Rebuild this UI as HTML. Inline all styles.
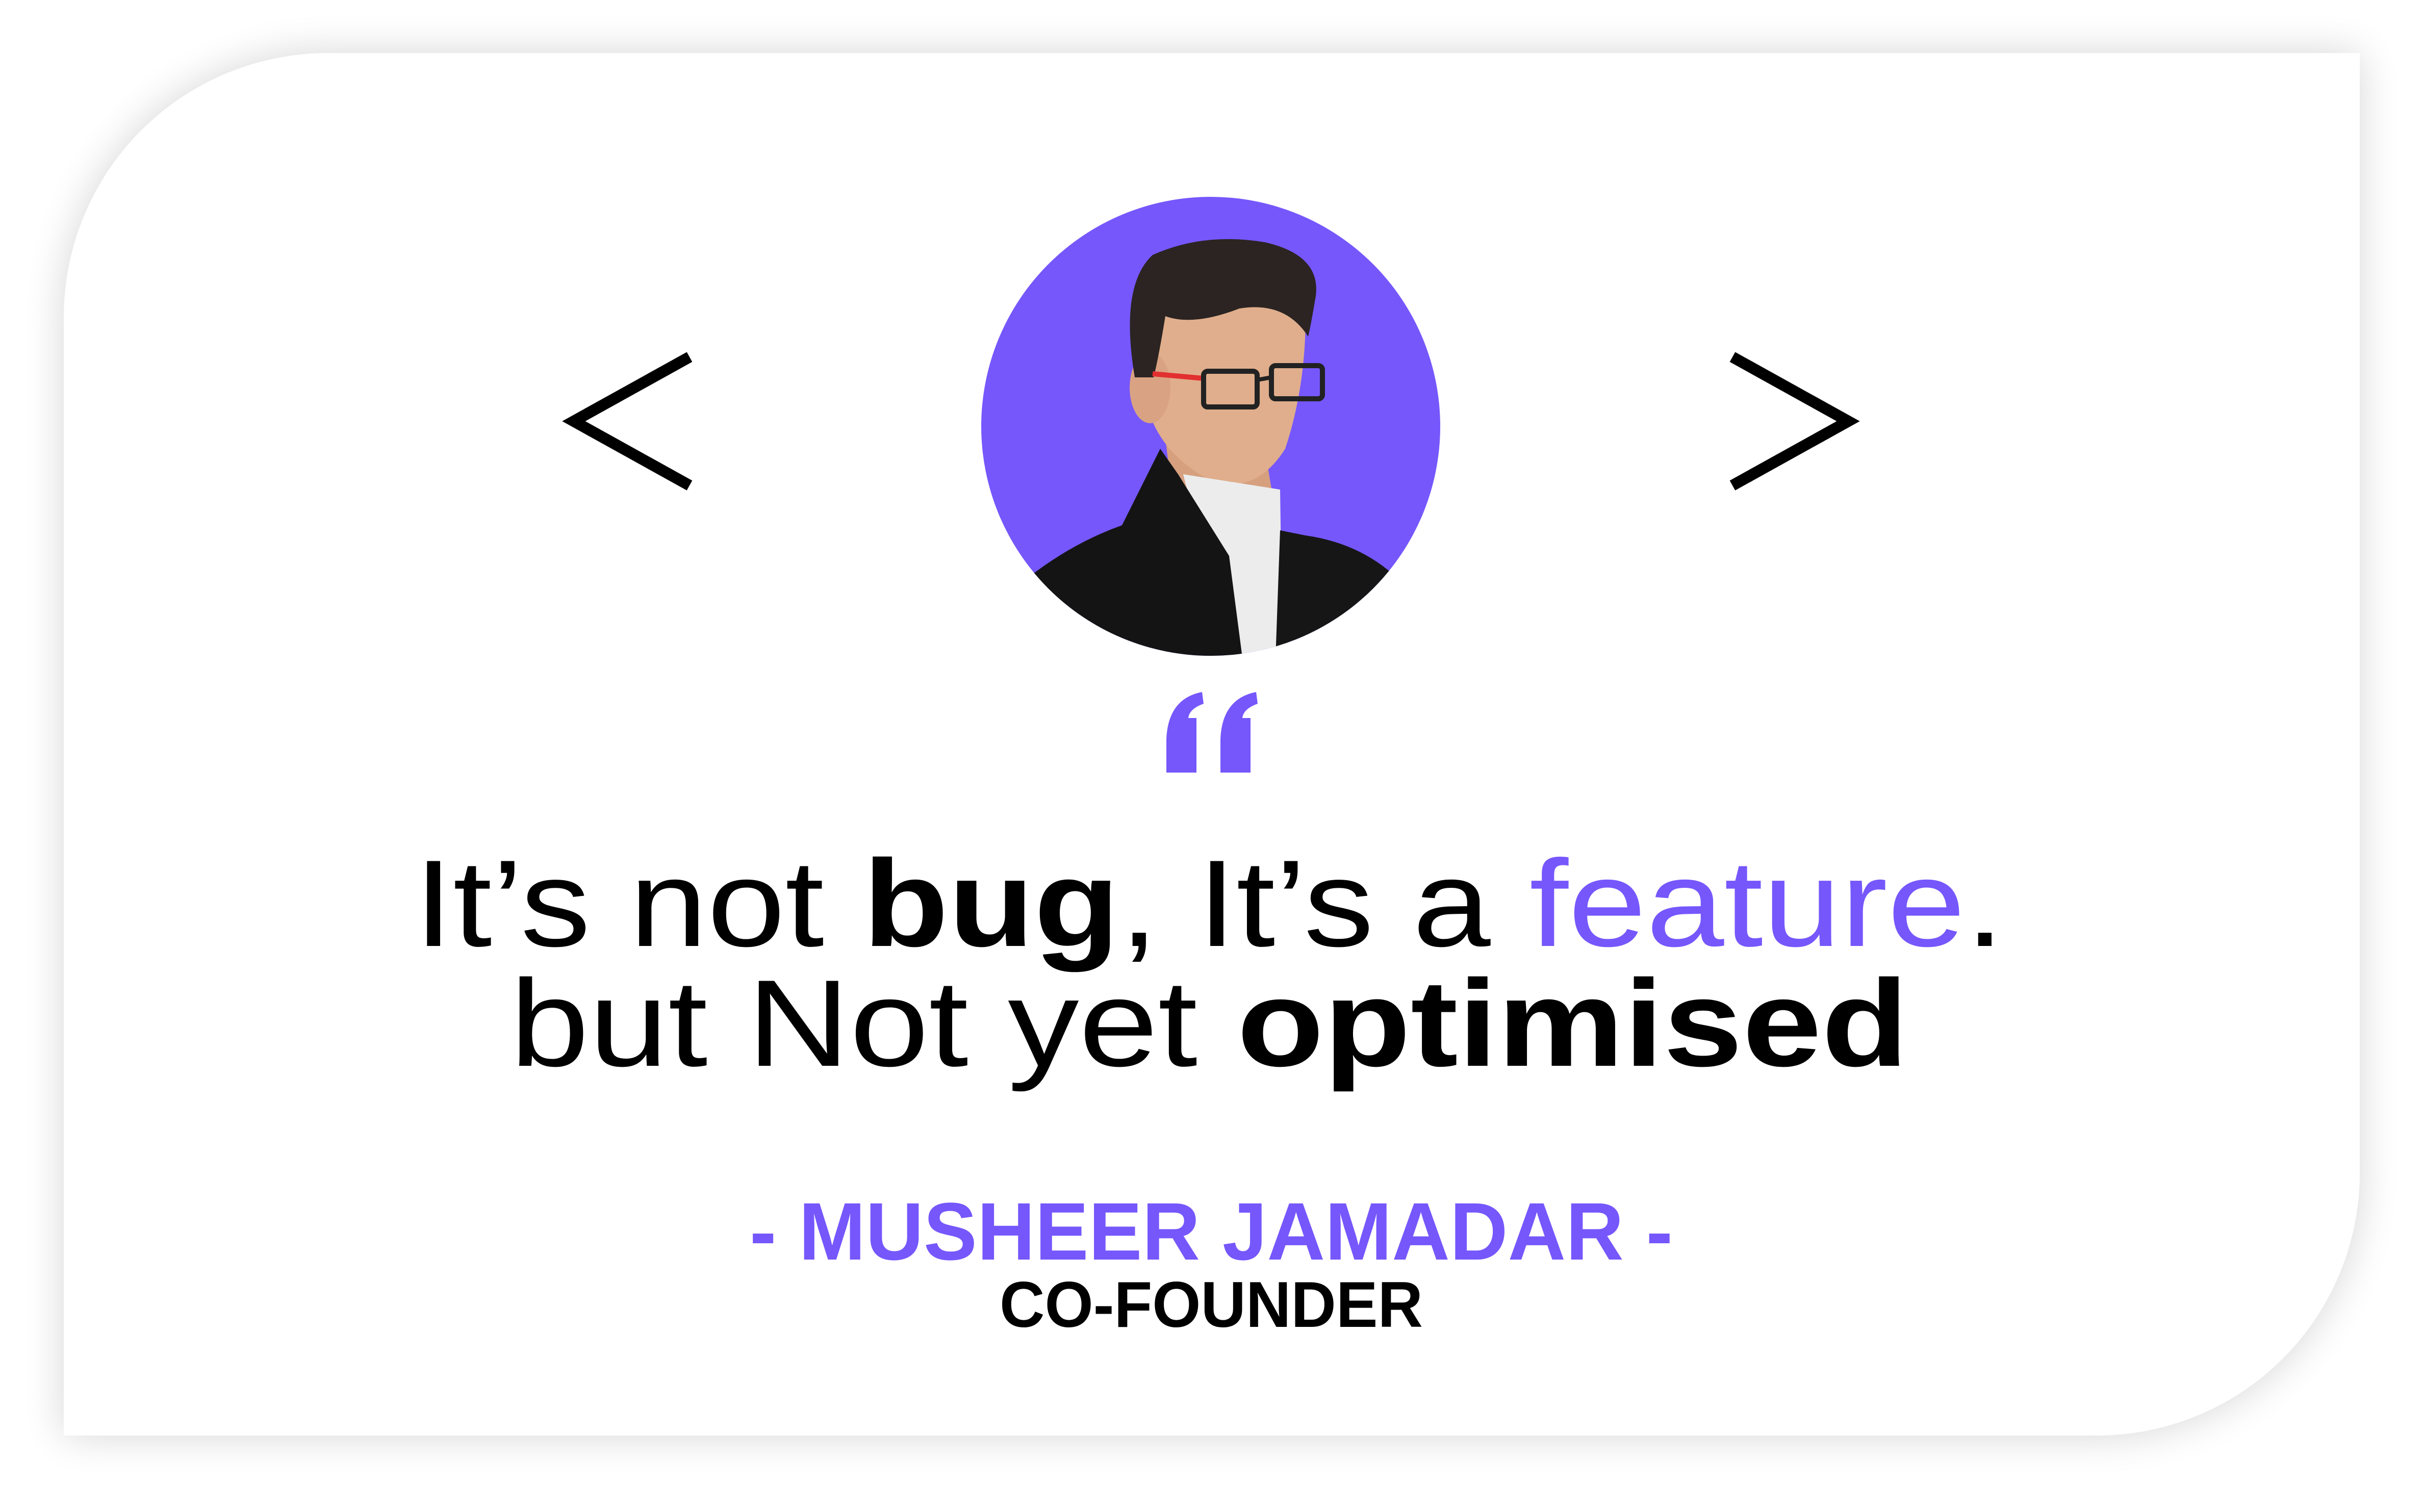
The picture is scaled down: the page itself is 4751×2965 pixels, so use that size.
<!DOCTYPE html>
<html><head><meta charset="utf-8">
<style>
html,body{margin:0;padding:0;background:#fff;}
body{width:4751px;height:2960px;overflow:hidden;position:relative;}
</style></head>
<body>
<svg width="4751" height="2960" viewBox="0 0 4751 2960" xmlns="http://www.w3.org/2000/svg">
<defs>
<filter id="sh" x="-10%" y="-10%" width="120%" height="120%">
<feGaussianBlur stdDeviation="40"/>
</filter>
<clipPath id="cc"><circle cx="2374" cy="836" r="450"/></clipPath>
</defs>
<path d="M125 622 A518 518 0 0 1 643 104 L4627 104 L4627 2300 A515 515 0 0 1 4112 2815 L125 2815 Z" fill="#000" opacity="0.16" filter="url(#sh)"/>
<path d="M125 622 A518 518 0 0 1 643 104 L4627 104 L4627 2300 A515 515 0 0 1 4112 2815 L125 2815 Z" fill="#fff"/>

<polyline points="1352,700 1125,826 1352,952" fill="none" stroke="#000" stroke-width="22"/>
<polyline points="3397,700 3624,826 3397,952" fill="none" stroke="#000" stroke-width="22"/>

<circle cx="2374" cy="836" r="450" fill="#7657fc"/>
<g clip-path="url(#cc)">
 <path d="M2280 820 L2470 820 L2500 1000 L2300 980 Z" fill="#d6a07f"/>
 <path d="M2240 560 Q2230 700 2250 800 Q2280 900 2390 950 Q2470 960 2520 880 Q2560 760 2560 620 Q2540 520 2400 520 Q2280 520 2240 560Z" fill="#e0ae8c"/>
 <ellipse cx="2255" cy="760" rx="40" ry="70" fill="#d9a283"/>
 <path d="M2225 740 Q2195 560 2260 500 Q2360 455 2480 475 Q2590 500 2580 580 Q2570 640 2565 660 Q2520 590 2430 605 Q2340 640 2285 620 Q2272 700 2262 740Z" fill="#2b2422"/>
 <path d="M2260 733 L2360 742" stroke="#e23030" stroke-width="10"/>
 <rect x="2360" y="728" width="105" height="70" rx="8" fill="none" stroke="#222" stroke-width="10"/>
 <rect x="2493" y="717" width="100" height="65" rx="8" fill="none" stroke="#222" stroke-width="10"/>
 <path d="M2465 745 L2493 740" stroke="#222" stroke-width="8"/>
 <path d="M2320 930 L2510 960 L2515 1320 L2420 1320 Z" fill="#ececec"/>
 <path d="M1940 1200 Q2060 1080 2200 1030 L2275 880 L2310 930 L2410 1090 L2440 1320 L1940 1320 Z" fill="#141414"/>
 <path d="M2500 1320 L2510 1040 L2560 1050 Q2700 1070 2780 1180 L2820 1320 Z" fill="#161616"/>
</g>

<g fill="#7657fc">
 <path d="M2287 1515 L2346 1515 L2346 1408 L2330 1408 Q2332 1390 2360 1380 L2357 1357 Q2290 1370 2287 1450 Z"/>
 <path d="M2393 1515 L2452 1515 L2452 1408 L2436 1408 Q2438 1390 2466 1380 L2463 1357 Q2396 1370 2393 1450 Z"/>
</g>

<g font-family="'Liberation Sans', sans-serif" text-anchor="start">
<text x="812" y="1855" font-size="242" textLength="3118" lengthAdjust="spacingAndGlyphs" fill="#000">It’s not <tspan font-weight="bold">bug</tspan>, It’s a <tspan fill="#7657fc">feature</tspan>.</text>
<text x="1000" y="2090" font-size="242" textLength="2742" lengthAdjust="spacingAndGlyphs" fill="#000">but Not yet <tspan font-weight="bold">optimised</tspan></text>
<text x="1470" y="2470" font-size="160" font-weight="bold" textLength="1810" lengthAdjust="spacingAndGlyphs" fill="#7657fc">- MUSHEER JAMADAR -</text>
<text x="1960" y="2602" font-size="127" font-weight="bold" textLength="830" lengthAdjust="spacingAndGlyphs" fill="#000">CO-FOUNDER</text>
</g>
</svg>
</body></html>
